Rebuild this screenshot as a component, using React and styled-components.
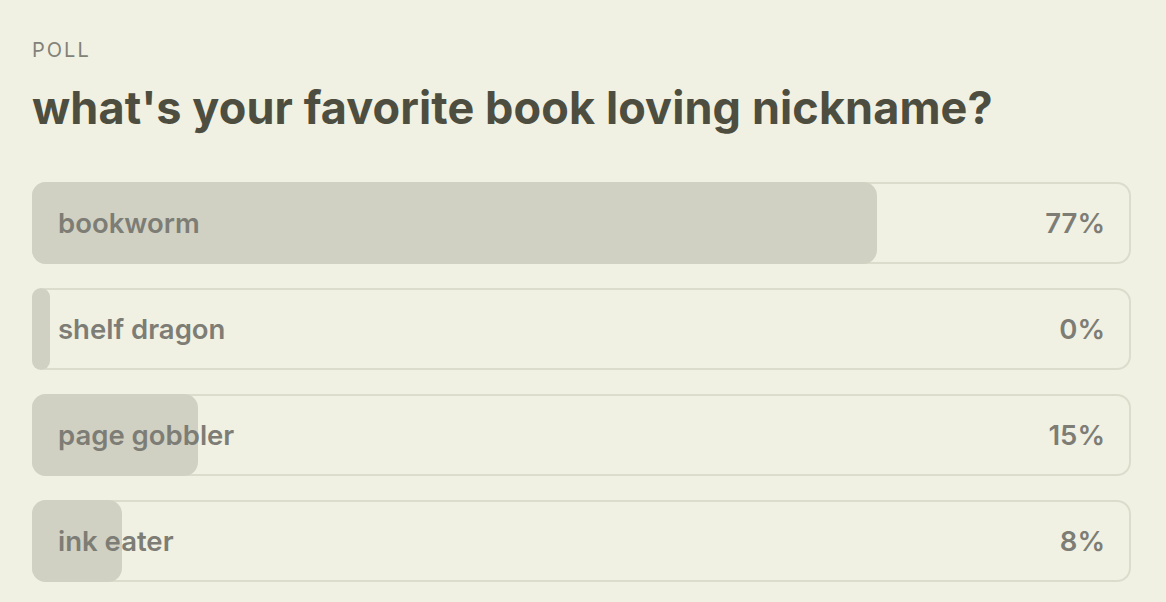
import React from "react";
import styled, { createGlobalStyle } from "styled-components";

const options = [
	{ label: "bookworm", pct: 77 },
	{ label: "shelf dragon", pct: 0 },
	{ label: "page gobbler", pct: 15 },
	{ label: "ink eater", pct: 8 },
];

const GlobalStyle = createGlobalStyle`
	html, body {
		margin: 0;
		padding: 0;
		background: #f1f1e3;
	}
	body {
		font-family: Inter, "Noto Sans", sans-serif;
	}
`;

const Poll = styled.section`
	padding: 38px 35px 20px 32px;
`;

const Kicker = styled.div`
	font-size: 20px;
	line-height: 24px;
	letter-spacing: 2px;
	color: #828279;
	text-transform: uppercase;
`;

const Question = styled.h1`
	margin: 18px 0 46px;
	font-size: 45px;
	line-height: 56px;
	font-weight: 700;
	letter-spacing: 0.1px;
	color: #4d4e3f;
`;

const List = styled.ul`
	list-style: none;
	margin: 0;
	padding: 0;
	display: flex;
	flex-direction: column;
	gap: 24px;
`;

const Option = styled.li`
	position: relative;
	display: flex;
	align-items: center;
	justify-content: space-between;
	height: 78px;
	padding: 0 24px;
	border: 2px solid #dcdccd;
	border-radius: 14px;
	background: #f1f1e3;
	font-size: 27.5px;
	font-weight: 600;
	color: #7d7d76;
`;

const Fill = styled.div`
	position: absolute;
	top: -2px;
	left: -2px;
	bottom: -2px;
	min-width: 18px;
	border-radius: 14px;
	background: #d1d1c3;
`;

const Text = styled.span`
	position: relative;
`;

export default function App() {
	return (
		<>
			<GlobalStyle />
			<Poll>
				<Kicker>Poll</Kicker>
				<Question>what's your favorite book loving nickname?</Question>
				<List>
					{options.map((o) => (
						<Option key={o.label}>
							<Fill style={{ width: `calc(${o.pct}% + 2px)` }} />
							<Text>{o.label}</Text>
							<Text>{o.pct}%</Text>
						</Option>
					))}
				</List>
			</Poll>
		</>
	);
}
